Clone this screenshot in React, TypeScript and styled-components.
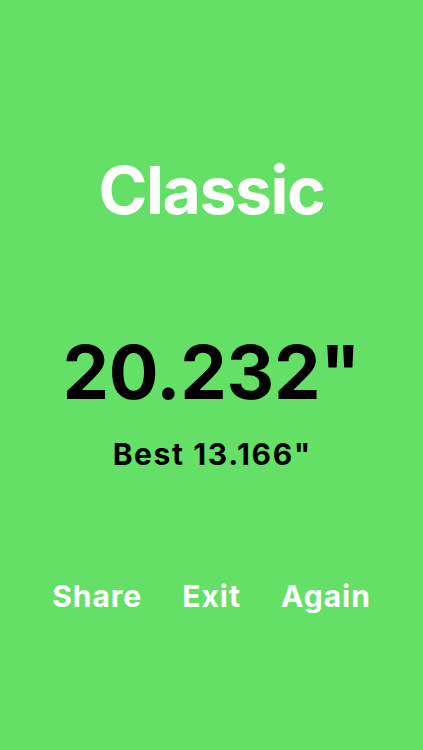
import React from "react";
import styled, { createGlobalStyle } from "styled-components";

const Global = createGlobalStyle`
  html, body { margin: 0; padding: 0; background: #65e066; }
  #root { min-height: 750px; }
`;

const Screen = styled.div`
  width: 423px;
  height: 750px;
  background: #65e066;
  display: flex;
  flex-direction: column;
  align-items: center;
  font-family: Inter, "Liberation Sans", Arial, sans-serif;
  font-weight: 700;
  padding-top: 157px;
  box-sizing: border-box;
`;

const Mode = styled.h1`
  margin: 0;
  font-size: 66px;
  line-height: 66px;
  font-weight: 700;
  color: #ffffff;
  letter-spacing: -1.4px;
`;

const Time = styled.div`
  margin-top: 112px;
  font-size: 74px;
  line-height: 74px;
  color: #000000;
  letter-spacing: -0.4px;
`;

const Best = styled.div`
  margin-top: 31px;
  font-size: 30px;
  line-height: 29px;
  color: #000000;
  letter-spacing: 1.6px;
  padding-left: 1.6px;
`;

const Actions = styled.nav`
  margin-top: 112px;
  display: flex;
  gap: 40px;
  justify-content: center;
`;

const Action = styled.button`
  background: none;
  border: none;
  padding: 0;
  margin: 0;
  font-family: inherit;
  font-weight: 700;
  font-size: 30px;
  line-height: 30px;
  color: #ffffff;
  letter-spacing: 1px;
  cursor: pointer;
`;

export default function App() {
  return (
    <>
      <Global />
      <Screen>
        <Mode>Classic</Mode>
        <Time>20.232"</Time>
        <Best>Best 13.166"</Best>
        <Actions>
          <Action>Share</Action>
          <Action>Exit</Action>
          <Action>Again</Action>
        </Actions>
      </Screen>
    </>
  );
}
